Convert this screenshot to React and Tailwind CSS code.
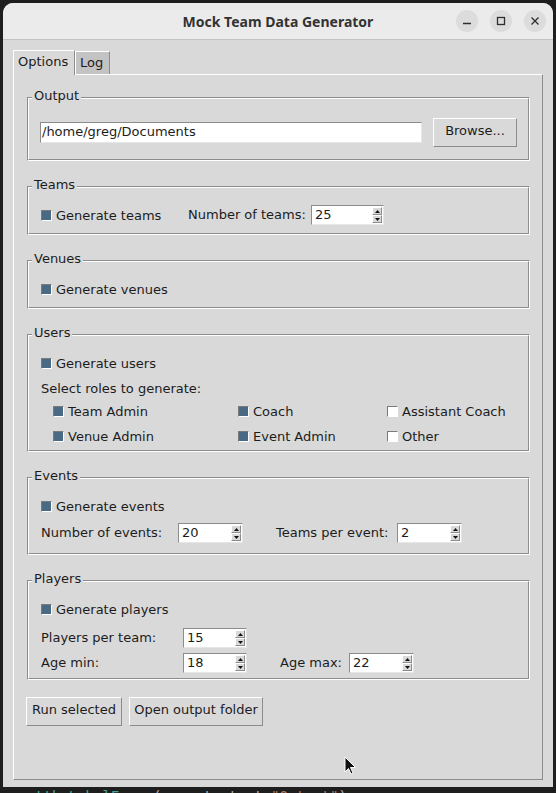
import React from "react";

const TEXT = "font-['DejaVu_Sans',sans-serif] text-[13px] text-[#1c1c1c]";

const Check = ({ on }) => (
  <span
    className={`inline-block w-[11px] h-[11px] shrink-0 border border-t-[#7a7a7a] border-l-[#7a7a7a] border-r-white border-b-white ${
      on ? "bg-[#4a6984]" : "bg-white"
    }`}
  />
);

const CheckItem = ({ on = true, label, className = "" }) => (
  <div className={`flex items-center gap-[4px] h-[20px] ${className}`}>
    <Check on={on} />
    <span className="leading-none">{label}</span>
  </div>
);

const Arrow = ({ up }) => (
  <div className="flex-1 flex items-center justify-center bg-[#d9d9d9] border border-t-white border-l-white border-r-[#8c8c8c] border-b-[#8c8c8c]">
    <svg width="5" height="3" viewBox="0 0 5 3">
      {up ? <path d="M0 3 L2.5 0 L5 3 Z" fill="#111" /> : <path d="M0 0 L2.5 3 L5 0 Z" fill="#111" />}
    </svg>
  </div>
);

const Spin = ({ value, w }) => (
  <div className={`flex h-[20px] bg-white border border-t-[#8c8c8c] border-l-[#8c8c8c] border-r-[#e6e6e6] border-b-[#e6e6e6] ${w}`}>
    <span className="flex-1 pl-[3px] leading-[18px]">{value}</span>
    <div className="flex flex-col w-[10px] py-[1px] mr-[1px]">
      <Arrow up />
      <Arrow />
    </div>
  </div>
);

const Group = ({ title, h, children }) => (
  <div className={`relative border border-t-[#8c8c8c] border-l-[#8c8c8c] border-r-white border-b-white ${h}`}>
    <div className="h-full border border-t-white border-l-white border-r-[#8c8c8c] border-b-[#8c8c8c]">
      {children}
    </div>
    <span className="absolute left-[4px] -top-[10px] bg-[#d9d9d9] px-[2px] leading-[16px]">{title}</span>
  </div>
);

const Btn = ({ children, w }) => (
  <button className={`h-[29px] pb-[3px] bg-[#d9d9d9] border border-t-white border-l-white border-r-[#8c8c8c] border-b-[#8c8c8c] text-center ${w}`}>
    {children}
  </button>
);

const WinBtn = ({ children }) => (
  <div className="w-[22px] h-[22px] rounded-full bg-[#dcdcdc] flex items-center justify-center">
    <svg width="10" height="10" viewBox="0 0 10 10" fill="none" stroke="#2e2e2e" strokeWidth="1.3">
      {children}
    </svg>
  </div>
);

export default function App() {
  return (
    <div className={`relative w-[556px] h-[793px] overflow-hidden bg-[#1e1e1e] pt-[3px] pl-[3px] ${TEXT}`}>
      <div className="w-[550px] h-[784px] bg-[#d9d9d9] rounded-t-[10px] overflow-hidden flex flex-col">
        {/* title bar */}
        <div className="h-[37px] shrink-0 bg-[#ebebeb] border-b border-[#c4c4c4] grid grid-cols-[1fr_auto_1fr] items-center">
          <div />
          <div className="font-['Noto_Sans',sans-serif] font-bold text-[14px] text-[#333]">Mock Team Data Generator</div>
          <div className="flex justify-end gap-[12px] pr-[7px]">
            <WinBtn>
              <path d="M1 7.5 H9" />
            </WinBtn>
            <WinBtn>
              <rect x="1.5" y="1.5" width="7" height="7" />
            </WinBtn>
            <WinBtn>
              <path d="M1.5 1.5 L8.5 8.5 M8.5 1.5 L1.5 8.5" />
            </WinBtn>
          </div>
        </div>

        <div className="flex-1 flex flex-col px-[10px] pt-[10px] pb-[7px]">
          {/* tabs */}
          <div className="flex h-[24px] items-start">
            <div className="relative z-10 h-[25px] w-[62px] bg-[#d9d9d9] border-t border-l border-r border-t-white border-l-white border-r-[#8c8c8c] pl-[4px] leading-[22px]">
              Options
            </div>
            <div className="mt-[1px] h-[23px] w-[35px] bg-[#c3c3c3] border-t border-l border-r border-t-white border-l-white border-r-[#8c8c8c] pl-[4px] leading-[21px]">
              Log
            </div>
          </div>

          {/* pane */}
          <div className="flex-1 border border-t-white border-l-white border-r-[#8c8c8c] border-b-[#8c8c8c] pt-[22px] pl-[13px] pr-[12px] flex flex-col">
            <div className="flex flex-col gap-[25px]">
              <Group title="Output" h="h-[64px]">
                <div className="flex items-center gap-[11px] pt-[19px] pl-[11px] pr-[11px] h-[48px]">
                  <div className="flex-1 h-[21px] bg-white border border-t-[#8c8c8c] border-l-[#8c8c8c] border-r-[#e6e6e6] border-b-[#e6e6e6] pl-[1px] leading-[18px]">
                    /home/greg/Documents
                  </div>
                  <Btn w="w-[84px]">Browse...</Btn>
                </div>
              </Group>

              <Group title="Teams" h="h-[49px]">
                <div className="flex items-center pt-[17px] pl-[12px]">
                  <CheckItem label="Generate teams" className="w-[147px]" />
                  <span className="w-[123px]">Number of teams:</span>
                  <Spin value="25" w="w-[73px]" />
                </div>
              </Group>

              <Group title="Venues" h="h-[49px]">
                <div className="pt-[17px] pl-[12px]">
                  <CheckItem label="Generate venues" />
                </div>
              </Group>

              <Group title="Users" h="h-[118px]">
                <div className="pt-[17px] pl-[12px]">
                  <CheckItem label="Generate users" />
                  <div className="mt-[6px] h-[20px] flex items-center">Select roles to generate:</div>
                  <div className="grid grid-cols-[185px_149px_auto] pl-[12px] mt-[2px] gap-y-[5px]">
                    <CheckItem label="Team Admin" />
                    <CheckItem label="Coach" />
                    <CheckItem on={false} label="Assistant Coach" />
                    <CheckItem label="Venue Admin" />
                    <CheckItem label="Event Admin" />
                    <CheckItem on={false} label="Other" />
                  </div>
                </div>
              </Group>

              <Group title="Events" h="h-[78px]">
                <div className="pt-[17px] pl-[12px]">
                  <CheckItem label="Generate events" />
                  <div className="mt-[7px] flex items-center">
                    <span className="w-[137px]">Number of events:</span>
                    <Spin value="20" w="w-[65px]" />
                    <span className="w-[33px]" />
                    <span className="w-[121px]">Teams per event:</span>
                    <Spin value="2" w="w-[65px]" />
                  </div>
                </div>
              </Group>

              <Group title="Players" h="h-[100px]">
                <div className="pt-[17px] pl-[12px]">
                  <CheckItem label="Generate players" />
                  <div className="mt-[9px] flex items-center">
                    <span className="w-[142px]">Players per team:</span>
                    <Spin value="15" w="w-[64px]" />
                  </div>
                  <div className="mt-[5px] flex items-center">
                    <span className="w-[142px]">Age min:</span>
                    <Spin value="18" w="w-[64px]" />
                    <span className="w-[33px]" />
                    <span className="w-[69px]">Age max:</span>
                    <Spin value="22" w="w-[65px]" />
                  </div>
                </div>
              </Group>
            </div>

            <div className="mt-[17px] -ml-[1px] flex gap-[7px]">
              <Btn w="w-[96px]">Run selected</Btn>
              <Btn w="w-[134px]">Open output folder</Btn>
            </div>
          </div>
        </div>
      </div>

      {/* editor text behind the window */}
      <div className="pl-[32px] font-['DejaVu_Sans_Mono',monospace] text-[14px] leading-[14px] mt-[2px] opacity-80">
        <span className="text-[#4ec9b0]">ttk.LabelFrame</span>
        <span className="text-[#d4d4d4]">(parent, text=</span>
        <span className="text-[#ce9178]">"Output"</span>
        <span className="text-[#d4d4d4]">)</span>
      </div>

      {/* mouse pointer */}
      <svg className="absolute left-[344px] top-[756px]" width="13" height="20" viewBox="0 0 13 20">
        <path d="M1 1 L1 16 L4.5 12.5 L7 18 L9 17 L6.5 11.5 L11.5 11.5 Z" fill="#111" stroke="#fff" strokeWidth="1" />
      </svg>
    </div>
  );
}
